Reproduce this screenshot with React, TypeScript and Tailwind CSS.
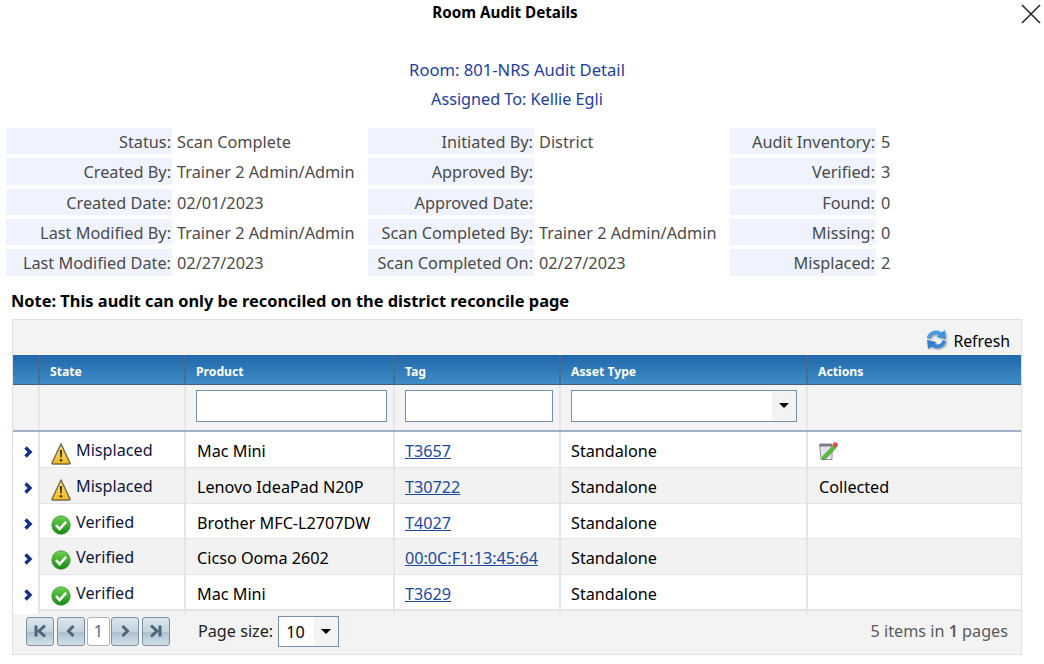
const font = 'font-["Noto_Sans","Open_Sans",sans-serif]';

const info = [
  [
    ['Status:', 'Scan Complete'],
    ['Created By:', 'Trainer 2 Admin/Admin'],
    ['Created Date:', '02/01/2023'],
    ['Last Modified By:', 'Trainer 2 Admin/Admin'],
    ['Last Modified Date:', '02/27/2023'],
  ],
  [
    ['Initiated By:', 'District'],
    ['Approved By:', ''],
    ['Approved Date:', ''],
    ['Scan Completed By:', 'Trainer 2 Admin/Admin'],
    ['Scan Completed On:', '02/27/2023'],
  ],
  [
    ['Audit Inventory:', '5'],
    ['Verified:', '3'],
    ['Found:', '0'],
    ['Missing:', '0'],
    ['Misplaced:', '2'],
  ],
];

const rows = [
  { state: 'Misplaced', product: 'Mac Mini', tag: 'T3657', action: 'edit', h: 'h-[36px]' },
  { state: 'Misplaced', product: 'Lenovo IdeaPad N20P', tag: 'T30722', action: 'Collected', h: 'h-[36px]' },
  { state: 'Verified', product: 'Brother MFC-L2707DW', tag: 'T4027', action: '', h: 'h-[35px]' },
  { state: 'Verified', product: 'Cicso Ooma 2602', tag: '00:0C:F1:13:45:64', action: '', h: 'h-[36px]' },
  { state: 'Verified', product: 'Mac Mini', tag: 'T3629', action: '', h: 'h-[35px]' },
];

const cols = 'grid grid-cols-[25px_146px_209px_166px_247px_215px]';

function WarnIcon() {
  return (
    <svg width="20" height="22" viewBox="0 0 20 22" className="shrink-0">
      <defs>
        <linearGradient id="warn" x1="0" y1="0" x2="0" y2="1">
          <stop offset="0" stopColor="#fbe48c" />
          <stop offset="1" stopColor="#f4bb14" />
        </linearGradient>
      </defs>
      <path d="M10 1 L19 20 Q19.300 21 18 21 L2 21 Q.7 21 1 20 Z" fill="url(#warn)" stroke="#756c50" strokeWidth="1.500" strokeLinejoin="round" />
      <path d="M8.900 7h2.200l-.4 7.500H9.300z" fill="#3f3210" />
      <circle cx="10" cy="17.300" r="1.300" fill="#3f3210" />
    </svg>
  );
}

function CheckIcon() {
  return (
    <svg width="20" height="20" viewBox="0 0 20 20" className="-mt-[2px] shrink-0">
      <defs>
        <linearGradient id="ok" x1="0" y1="0" x2="0" y2="1">
          <stop offset="0" stopColor="#6fd24e" />
          <stop offset="1" stopColor="#128a12" />
        </linearGradient>
      </defs>
      <circle cx="10" cy="10" r="9.200" fill="url(#ok)" stroke="#3f8f3a" strokeWidth=".8" />
      <path d="M5 10.200 8.600 14 15 6.800" fill="none" stroke="#fff" strokeWidth="2.600" />
    </svg>
  );
}

function RefreshIcon() {
  return (
    <svg width="21" height="21" viewBox="0 0 20 20" className="mb-[2px] shrink-0 drop-shadow-[1px_1px_1px_rgba(0,0,0,0.35)]">
      <path d="M2.500 9C3.500 4 9.500 1.500 14 5" fill="none" stroke="#4a9ae0" strokeWidth="3.600" />
      <path d="M10 7.500 19 9.500 18 1z" fill="#3f8fd8" />
      <path d="M17.500 11C16.500 16 10.500 18.500 6 15" fill="none" stroke="#3a86d0" strokeWidth="3.600" />
      <path d="M10 12.500 1 10.500 2 19z" fill="#2f7cc8" />
    </svg>
  );
}

function EditIcon() {
  return (
    <svg width="20" height="21" viewBox="0 0 20 20">
      <path d="M1.500 2.500h12.500v15.500H3z" fill="#e6e3f0" stroke="#8f899e" />
      <path d="M1.500 2.500h12.500v2.500H2z" fill="#7f7a80" />
      <path d="M4.500 15 15.500 3.500l3 2.500L8 17l-4 1z" fill="#58bb3a" stroke="#3c8f2a" strokeWidth=".5" />
      <circle cx="17.300" cy="3.200" r="2.500" fill="#e4503f" />
    </svg>
  );
}

function PagerButton({ kind }: { kind: 'first' | 'prev' | 'next' | 'last' }) {
  const paths = {
    first: 'M6 4.500v11M15 4.500l-6 5.500 6 5.500',
    prev: 'M12.500 5l-5 5 5 5',
    next: 'M7.500 5l5 5-5 5',
    last: 'M14 4.500v11M5 4.500l6 5.500-6 5.500',
  };
  return (
    <button className="flex h-[29px] w-[28px] items-center justify-center rounded-[3px] border border-[#7d90a2] bg-[linear-gradient(#dbe6ec,#c3d4de_50%,#abc1ce_52%,#d3e0e7)]">
      <svg width="20" height="20" viewBox="0 0 20 20" fill="none" stroke="#4d6579" strokeWidth="3">
        <path d={paths[kind]} />
      </svg>
    </button>
  );
}

function Caret() {
  return <span className="h-0 w-0 border-x-[5px] border-t-[5px] border-x-transparent border-t-black" />;
}

export default function App() {
  return (
    <div className={`${font} relative h-[664px] w-[1044px] overflow-hidden bg-white text-[16.3px] text-[#4a4a4a]`}>
      <h1 className="h-[57px] pt-[2px] pr-[34px] text-center text-[15.2px] leading-[20px] font-bold text-black">Room Audit Details</h1>
      <button className="absolute top-[4px] right-[3px] text-[#222]">
        <svg width="20" height="20" viewBox="0 0 20 20" stroke="currentColor" strokeWidth="1.500">
          <path d="M1 1l18 18M19 1 1 19" />
        </svg>
      </button>

      {/* Heading */}
      <div className="pr-[10px] text-center text-[16.6px] text-[#1a3ea0]">
        <div className="h-[28px] leading-[26px]">Room: 801-NRS Audit Detail</div>
        <div className="h-[28px] text-[16.2px] leading-[28px]">Assigned To: Kellie Egli</div>
      </div>

      {/* Summary */}
      <div className="mt-[15px] ml-[6px] flex">
        {info.map((col, c) => (
          <div key={c} className={`flex flex-col gap-[4px] ${c === 2 ? 'w-[300px]' : 'w-[362px]'}`}>
            {col.map(([label, value]) => (
              <div key={label} className="flex h-[26.333px] leading-[28.6px]">
                <div className={`${c === 2 ? 'w-[146px]' : 'w-[166px]'} bg-[#eff3fe] pr-[1px] text-right text-[16.3px]`}>{label}</div>
                <div className="pl-[5px]">{value}</div>
              </div>
            ))}
          </div>
        ))}
      </div>

      <div className="mt-[14px] ml-[11px] h-[22px] text-[16.4px] leading-[22px] font-bold text-black">
        Note: This audit can only be reconciled on the district reconcile page
      </div>

      {/* Grid */}
      <div className="mt-[7px] ml-[12px] w-[1010px] border border-[#e0e0e0] bg-[#f3f3f3] text-[16.2px] text-black">
        <div className="flex h-[35px] items-center justify-end gap-[6px] pt-[6px] pr-[11px]">
          <RefreshIcon />
          <span className="pt-[4px] text-[15.8px]">Refresh</span>
        </div>

        <div className={`${cols} h-[30px] border-b border-[#41607f] bg-[linear-gradient(#1f67aa,#3f8dc6)] text-[12.2px] leading-[33px] font-bold text-white`}>
          <div />
          {['State', 'Product', 'Tag', 'Asset Type', 'Actions'].map((h) => (
            <div key={h} className="border-l-2 border-[#4a6d8e] pl-[10px]">{h}</div>
          ))}
        </div>

        <div className={`${cols} h-[47px] border-b-2 border-[#9fb0c8]`}>
          <div />
          <div className="border-l-2 border-[#e2e6eb]" />
          <div className="border-l-2 border-[#e2e6eb] pt-[5px] pl-[10px]">
            <input className="h-[32px] w-[191px] border border-[#7390ae] bg-white" />
          </div>
          <div className="border-l-2 border-[#e2e6eb] pt-[5px] pl-[10px]">
            <input className="h-[32px] w-[148px] border border-[#7390ae] bg-white" />
          </div>
          <div className="border-l-2 border-[#e2e6eb] pt-[5px] pl-[10px]">
            <div className="flex h-[32px] w-[226px] justify-end border border-[#7390ae] bg-white">
              <div className="flex w-[24px] items-center justify-center bg-[#f3f3f3]">
                <Caret />
              </div>
            </div>
          </div>
          <div className="border-l-2 border-[#e2e6eb]" />
        </div>

        {rows.map((r, i) => (
          <div key={i} className={`${cols} ${r.h} border-b border-[#e2e6eb] ${i % 2 ? 'bg-[#f2f2f2]' : 'bg-white'} leading-[39px] last:border-b-0`}>
            <div className="flex items-center justify-center bg-white pt-[1px] pl-[4px] text-[#12308c]">
              <svg width="10" height="12" viewBox="0 0 10 12" fill="none" stroke="currentColor" strokeWidth="3.400">
                <path d="M2.500 1.500 7 6 2.500 10.500" />
              </svg>
            </div>
            <div className="flex items-center gap-[5px] border-l-2 border-[#e2e6eb] pt-[4px] pl-[11px] leading-[24px]">
              <span className="mt-[2px] flex">{r.state === 'Verified' ? <CheckIcon /> : <WarnIcon />}</span>
              <span className="-mt-[6px] text-[#10163a]">{r.state}</span>
            </div>
            <div className="border-l-2 border-[#e2e6eb] pl-[11px]">{r.product}</div>
            <div className="border-l-2 border-[#e2e6eb] pl-[10px]">
              <a className="text-[#1a4aa0] underline">{r.tag}</a>
            </div>
            <div className="border-l-2 border-[#e2e6eb] pl-[10px]">Standalone</div>
            <div className="border-l-2 border-[#e2e6eb] pl-[11px]">
              {r.action === 'edit' ? <div className="-ml-px flex h-full items-center"><EditIcon /></div> : r.action}
            </div>
          </div>
        ))}

        {/* Pager */}
        <div className="flex h-[44px] items-center border-t border-[#e6e6e6] pr-[13px] pb-[2px] pl-[13px]">
          <div className="flex items-center gap-[3px]">
            <PagerButton kind="first" />
            <PagerButton kind="prev" />
            <div className="-ml-[1px] flex h-[29px] w-[23px] items-center justify-center rounded-[3px] border border-[#a6b4c0] bg-white text-[#4a6a8a]">1</div>
            <div className="-ml-[2px]"><PagerButton kind="next" /></div>
            <PagerButton kind="last" />
          </div>
          <span className="ml-[28px] text-[#222]">Page size:</span>
          <div className="ml-[5px] flex h-[31px] w-[61px] items-center border border-[#7390ae] bg-white pl-[7px]">
            <span className="flex-1 pt-[2px]">10</span>
            <div className="flex h-full w-[24px] items-center justify-center bg-[#f3f3f3]">
              <Caret />
            </div>
          </div>
          <span className="ml-auto text-[#5a5a5a]">5 items in <span className="font-semibold">1</span> pages</span>
        </div>
      </div>
    </div>
  );
}
